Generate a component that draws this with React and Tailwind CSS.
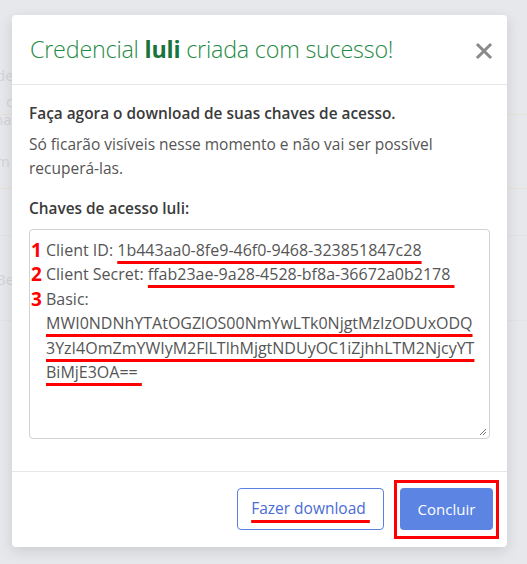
export default function App() {
  return (
    <div
      className="relative w-[527px] h-[564px] overflow-hidden bg-[#e7e8ec] pt-[15px] px-[12px]"
      style={{ fontFamily: "'Open Sans', Lato, sans-serif" }}
    >
      {/* faint page behind the overlay */}
      <div className="absolute inset-0 text-[#d3d4d8] text-[15px]">
        <div className="absolute left-[-4px] top-[64px]">de</div>
        <div className="absolute left-[6px] top-[90px]">c</div>
        <div className="absolute left-[-6px] top-[108px]">na</div>
        <div className="absolute left-0 top-[114px] w-full border-t border-[#e6e2d8]" />
        <div className="absolute left-[-4px] top-[150px]">m</div>
        <div className="absolute left-0 top-[188px] w-full border-t border-[#e6e2d8]" />
        <div className="absolute left-[-4px] top-[268px]">Be</div>
        <div className="absolute left-0 top-[235px] w-full border-t border-[#e2e3e7]" />
        <div className="absolute left-0 top-[320px] w-full border-t border-[#e2e3e7]" />
      </div>

      <div className="relative w-[495px] h-[532px] bg-white rounded-[4px] shadow-[0_4px_14px_rgba(0,0,0,0.12)] flex flex-col">
        {/* Header */}
        <div className="h-[70px] flex items-center justify-between pl-[18px] pr-[14px] border-b border-[#e5e6ea]">
          <h1 className="text-[23.3px] text-[#1f8a45] font-light tracking-[-0.2px]">
            Credencial <span className="font-bold text-[#17743a]">luli</span> criada com sucesso!
          </h1>
          <svg width="18" height="18" viewBox="0 0 18 18" className="mt-[2px]">
            <path d="M3 3 L15 15 M15 3 L3 15" stroke="#8a8a8a" strokeWidth="3" strokeLinecap="square" />
          </svg>
        </div>

        {/* Body */}
        <div className="flex-1 px-[17px] pt-[17px]">
          <p className="font-semibold leading-[24px] text-[15.4px] text-[#3a3a3a]">
            Faça agora o download de suas chaves de acesso.
          </p>
          <p className="mt-[6px] leading-[24px] text-[15.5px] text-[#555]">
            Só ficarão visíveis nesse momento e não vai ser possível
            <br />
            recuperá-las.
          </p>
          <p className="mt-[17px] font-semibold leading-[24px] text-[15.4px] text-[#3a3a3a]">
            Chaves de acesso luli:
          </p>

          <div className="relative mt-[8px] h-[210px] border border-[#cfd2d6] rounded-[4px] pl-[16px] pt-[8px] text-[#555] leading-[24.4px] text-[16px]">
            <div className="relative">
              <span className="absolute left-[-15px] top-0 text-[red] font-bold text-[19px]">1</span>
              Client ID:{" "}
              <span className="underline decoration-[red] decoration-[3px] underline-offset-[5px]">
                1b443aa0-8fe9-46f0-9468-323851847c28
              </span>
            </div>
            <div className="relative">
              <span className="absolute left-[-15px] top-0 text-[red] font-bold text-[19px]">2</span>
              Client Secret:{" "}
              <span className="underline decoration-[red] decoration-[3px] underline-offset-[5px]">
                ffab23ae-9a28-4528-bf8a-36672a0b2178&nbsp;
              </span>
            </div>
            <div className="relative">
              <span className="absolute left-[-15px] top-0 text-[red] font-bold text-[19px]">3</span>
              Basic:
            </div>
            <div className="underline decoration-[red] decoration-[3px] underline-offset-[5px] whitespace-nowrap">
              MWI0NDNhYTAtOGZlOS00NmYwLTk0NjgtMzIzODUxODQ
            </div>
            <div className="underline decoration-[red] decoration-[3px] underline-offset-[5px] whitespace-nowrap">
              3YzI4OmZmYWIyM2FlLTlhMjgtNDUyOC1iZjhhLTM2NjcyYT
            </div>
            <div className="underline decoration-[red] decoration-[3px] underline-offset-[5px] whitespace-nowrap">
              BiMjE3OA==&nbsp;
            </div>
            <svg width="8" height="8" viewBox="0 0 8 8" className="absolute right-[2px] bottom-[2px]">
              <path d="M7 1 L1 7 M7 4 L4 7" stroke="#777" strokeWidth="1" />
            </svg>
          </div>
        </div>

        {/* Footer */}
        <div className="h-[76px] border-t border-[#e5e6ea] flex items-start justify-end gap-[10px] pt-[8px] pr-[8px]">
          <button className="mt-[8px] h-[42px] w-[147px] border border-[#5b80e2] rounded-[4px] text-[#4a6cd4] text-[15.5px] bg-white">
            <span className="underline decoration-[red] decoration-[3px] underline-offset-[6px]">
              Fazer download&nbsp;
            </span>
          </button>
          <div className="border-[3px] border-[red] pt-[5px] pb-[6px] px-[3px]">
            <button className="h-[42px] w-[93px] rounded-[4px] bg-[#5c84e3] text-white text-[15px]">
              Concluir
            </button>
          </div>
        </div>
      </div>
    </div>
  );
}
